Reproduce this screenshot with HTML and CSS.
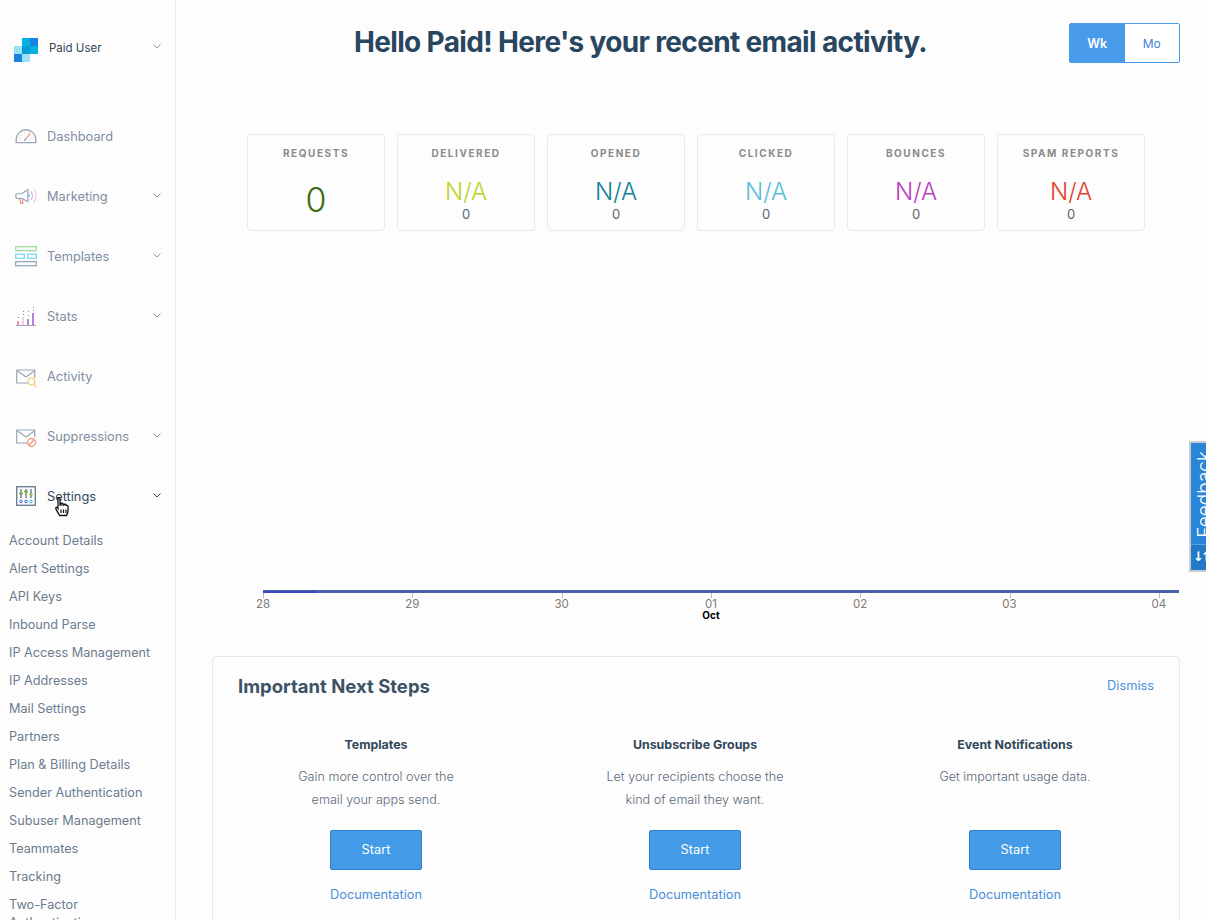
FILE: index.html
```html
<!DOCTYPE html>
<html lang="en">
<head>
    <meta charset="UTF-8">
    <title>Dashboard</title>
    <link rel="stylesheet" href="styles.css">
</head>
<body>
    <div class="app">
        <aside class="sidebar">
            <div class="account">
                <svg class="logo" width="24" height="24" viewBox="0 0 24 24">
                    <rect x="8" y="0" width="8" height="8" fill="#00b3e3"/>
                    <rect x="16" y="0" width="8" height="8" fill="#1a82e2"/>
                    <rect x="0" y="8" width="8" height="8" fill="#99e1f4"/>
                    <rect x="8" y="8" width="8" height="8" fill="#009dd9"/>
                    <rect x="16" y="8" width="8" height="8" fill="#00b3e3"/>
                    <rect x="0" y="16" width="8" height="8" fill="#1a82e2"/>
                    <rect x="8" y="16" width="8" height="8" fill="#99e1f4"/>
                </svg>
                <span class="account-name">Paid User</span>
                <svg class="chev" width="8" height="5" viewBox="0 0 8 5"><path d="M.5.5 4 4 7.500.5" fill="none" stroke="#8a9bb0"/></svg>
            </div>

            <nav class="nav">
                <a class="nav-item">
                    <span class="nav-icon">
                        <svg width="22" height="16" viewBox="0 0 24 18" fill="none">
                            <path d="M1 16.500V13A11 11 0 0 1 23 13v3.500z" stroke="#9aa7b8" stroke-width="1.500"/>
                            <path d="M5 12a7.500 7.500 0 0 1 3-6M10 4.500l1 0M15 5l1 .7M19 12v-1" stroke="#f5d76e" stroke-width="1.200" stroke-dasharray="1.500 1.500"/>
                            <path d="M11 13l6-7" stroke="#f29a7c" stroke-width="1.400"/>
                            <circle cx="11" cy="13.500" r="1.300" fill="#7cc4ee"/>
                        </svg>
                    </span>
                    <span class="nav-label">Dashboard</span>
                </a>
                <a class="nav-item">
                    <span class="nav-icon">
                        <svg width="22" height="19" viewBox="0 0 24 20" fill="none">
                            <path d="M2 7h5l7-4.500v13L7 12H2a1 1 0 0 1-1-1V8a1 1 0 0 1 1-1z" stroke="#9aa7b8" stroke-width="1.300"/>
                            <path d="M5 12.500l1.500 5h2L8 13" stroke="#ef8a72" stroke-width="1.200"/>
                            <circle cx="15" cy="9" r="1.500" fill="#7cc4ee"/>
                            <path d="M17 4a8 8 0 0 1 0 10" stroke="#e0a7de" stroke-width="1.100"/>
                            <path d="M20 1a12 12 0 0 1 0 16" stroke="#eac4e8" stroke-width="1.100"/>
                        </svg>
                    </span>
                    <span class="nav-label">Marketing</span>
                    <svg class="chev" width="8" height="5" viewBox="0 0 8 5"><path d="M.5.5 4 4 7.500.5" fill="none" stroke="#8a9bb0"/></svg>
                </a>
                <a class="nav-item">
                    <span class="nav-icon">
                        <svg width="22" height="21" viewBox="0 0 22 21" fill="none">
                            <rect x=".7" y=".7" width="20.600" height="4" stroke="#a5dba0" stroke-width="1.300"/>
                            <rect x=".7" y="8.200" width="8.600" height="4" stroke="#7fd6f7" stroke-width="1.300"/>
                            <rect x="12.700" y="8.200" width="8.600" height="4" stroke="#7fd6f7" stroke-width="1.300"/>
                            <rect x=".7" y="15.700" width="20.600" height="4" stroke="#9aa7b8" stroke-width="1.300"/>
                        </svg>
                    </span>
                    <span class="nav-label">Templates</span>
                    <svg class="chev" width="8" height="5" viewBox="0 0 8 5"><path d="M.5.5 4 4 7.500.5" fill="none" stroke="#8a9bb0"/></svg>
                </a>
                <a class="nav-item">
                    <span class="nav-icon nav-icon-in">
                        <svg width="20" height="20" viewBox="0 0 20 20" fill="none">
                            <path d="M0 19.500h20" stroke="#9aa7b8"/>
                            <rect x="1" y="15" width="2" height="4" fill="#f78fb3"/>
                            <rect x="6" y="11" width="2" height="8" fill="#f3cfe6"/>
                            <rect x="11" y="13" width="2" height="6" fill="#a88ae0"/>
                            <rect x="16" y="7" width="2" height="12" fill="#b57edc"/>
                            <path d="M2 11.500h1M7 5.500h1M7 8.500h1M12 9.500h1M12 5.500h1M17 1.500h1M17 4.500h1" stroke="#7d8ba0"/>
                        </svg>
                    </span>
                    <span class="nav-label">Stats</span>
                    <svg class="chev" width="8" height="5" viewBox="0 0 8 5"><path d="M.5.5 4 4 7.500.5" fill="none" stroke="#8a9bb0"/></svg>
                </a>
                <a class="nav-item">
                    <span class="nav-icon nav-icon-in">
                        <svg class="mail-icon" width="21" height="19" viewBox="0 0 21 19" fill="none">
                            <path d="M12 14H.7V1h18v8" stroke="#9aa7b8" stroke-width="1.200"/>
                            <path d="M1 1.500l9 6.500 9-6.500" stroke="#9aa7b8" stroke-width="1.200"/>
                            <circle cx="15.500" cy="12.500" r="3.300" stroke="#f7cf7e" stroke-width="1.300"/>
                            <path d="M18 15l2.500 3" stroke="#f7cf7e" stroke-width="1.300"/>
                        </svg>
                    </span>
                    <span class="nav-label">Activity</span>
                </a>
                <a class="nav-item">
                    <span class="nav-icon nav-icon-in">
                        <svg class="mail-icon" width="21" height="19" viewBox="0 0 21 19" fill="none">
                            <path d="M11 14H.7V1h18v7" stroke="#9aa7b8" stroke-width="1.200"/>
                            <path d="M1 1.500l9 6.500 9-6.500" stroke="#9aa7b8" stroke-width="1.200"/>
                            <circle cx="15.500" cy="13.500" r="4" stroke="#f09a80" stroke-width="1.400"/>
                            <path d="M12.800 16.200l5.400-5.400" stroke="#f09a80" stroke-width="1.400"/>
                        </svg>
                    </span>
                    <span class="nav-label">Suppressions</span>
                    <svg class="chev" width="8" height="5" viewBox="0 0 8 5"><path d="M.5.5 4 4 7.500.5" fill="none" stroke="#8a9bb0"/></svg>
                </a>
                <a class="nav-item nav-item-open">
                    <span class="nav-icon nav-icon-in">
                        <svg width="20" height="20" viewBox="0 0 20 20" fill="none">
                            <rect x=".7" y=".7" width="18.600" height="18.600" stroke="#6f7f94" stroke-width="1.400"/>
                            <path d="M5 3v9M10 3v9M15 3v9" stroke="#33475b"/>
                            <path d="M3 7.500h4M8 5.500h4" stroke="#5cb531" stroke-width="1.500"/>
                            <path d="M13 8.500h4" stroke="#b7c92e" stroke-width="1.500"/>
                            <circle cx="5" cy="15.500" r="1.300" stroke="#3563c9"/>
                            <circle cx="10" cy="15.500" r="1.300" stroke="#3563c9"/>
                            <circle cx="15" cy="15.500" r="1.300" stroke="#2bb6d9"/>
                        </svg>
                    </span>
                    <span class="nav-label">Settings</span>
                    <svg class="chev" width="8" height="5" viewBox="0 0 8 5"><path d="M.5.5 4 4 7.500.5" fill="none" stroke="#33475b"/></svg>
                </a>
            </nav>

            <ul class="subnav">
                <li>Account Details</li>
                <li>Alert Settings</li>
                <li>API Keys</li>
                <li>Inbound Parse</li>
                <li>IP Access Management</li>
                <li>IP Addresses</li>
                <li>Mail Settings</li>
                <li>Partners</li>
                <li>Plan &amp; Billing Details</li>
                <li>Sender Authentication</li>
                <li>Subuser Management</li>
                <li>Teammates</li>
                <li>Tracking</li>
                <li class="subnav-wrap">Two-Factor Authentication</li>
            </ul>
        </aside>

        <main class="main">
            <header class="top">
                <h1>Hello Paid! Here's your recent email activity.</h1>
                <div class="toggle">
                    <span class="toggle-btn toggle-on">Wk</span>
                    <span class="toggle-btn">Mo</span>
                </div>
            </header>

            <section class="cards">
                <div class="card">
                    <div class="card-title">REQUESTS</div>
                    <div class="card-big card-zero">0</div>
                </div>
                <div class="card">
                    <div class="card-title">DELIVERED</div>
                    <div class="card-big delivered">N/A</div>
                    <div class="card-small">0</div>
                </div>
                <div class="card">
                    <div class="card-title">OPENED</div>
                    <div class="card-big opened">N/A</div>
                    <div class="card-small">0</div>
                </div>
                <div class="card">
                    <div class="card-title">CLICKED</div>
                    <div class="card-big clicked">N/A</div>
                    <div class="card-small">0</div>
                </div>
                <div class="card">
                    <div class="card-title">BOUNCES</div>
                    <div class="card-big bounces">N/A</div>
                    <div class="card-small">0</div>
                </div>
                <div class="card card-wide">
                    <div class="card-title">SPAM REPORTS</div>
                    <div class="card-big spam">N/A</div>
                    <div class="card-small">0</div>
                </div>
            </section>

            <section class="chart">
                <div class="chart-line"><span class="chart-line-start"></span></div>
                <div class="axis">
                    <div class="tick"><span>28</span></div>
                    <div class="tick"><span>29</span></div>
                    <div class="tick"><span>30</span></div>
                    <div class="tick"><span>01</span><b>Oct</b></div>
                    <div class="tick"><span>02</span></div>
                    <div class="tick"><span>03</span></div>
                    <div class="tick"><span>04</span></div>
                </div>
            </section>

            <section class="steps">
                <div class="steps-head">
                    <h2>Important Next Steps</h2>
                    <a class="dismiss">Dismiss</a>
                </div>
                <div class="steps-row">
                    <div class="step">
                        <h3>Templates</h3>
                        <p>Gain more control over the<br>email your apps send.</p>
                        <a class="start">Start</a>
                        <a class="doc">Documentation</a>
                    </div>
                    <div class="step">
                        <h3>Unsubscribe Groups</h3>
                        <p>Let your recipients choose the<br>kind of email they want.</p>
                        <a class="start">Start</a>
                        <a class="doc">Documentation</a>
                    </div>
                    <div class="step">
                        <h3>Event Notifications</h3>
                        <p>Get important usage data.<br>&nbsp;</p>
                        <a class="start">Start</a>
                        <a class="doc">Documentation</a>
                    </div>
                </div>
            </section>
        </main>
    </div>

    <div class="feedback">
        <div class="feedback-text">Feedback</div>
        <div class="feedback-arrows">&#8595;&#8593;</div>
    </div>

    <svg class="cursor" width="15" height="20" viewBox="0 0 15 20">
        <path d="M3 1.500c0-1 2-1 2 0V8h1V7c0-1 2-1 2 0v1h1c0-1 2-1 2 0v1c0-1 2-.8 2 .2V14c0 2-1 3-1.500 4.500h-7C4 16.500 1.500 14 .8 11.500c-.3-1.200 1-1.700 1.700-.8L3 11.500z" fill="#fff" stroke="#111" stroke-width="1.300"/>
        <path d="M6 12.500v3.500M8.500 12.500v3.500M11 12.500v3.500" stroke="#111" stroke-width="1.200"/>
    </svg>
</body>
</html>
```

FILE: styles.css
```css
html, body {
    margin: 0;
    height: 920px;
    overflow: hidden;
}
body {
    font-family: Inter, "Noto Sans", Arial, sans-serif;
    font-size: 13px;
    color: #33475b;
    background-color: #fdfdfd;
    position: relative;
}
.app {
    display: flex;
    height: 920px;
    overflow: hidden;
}

/* sidebar */
.sidebar {
    width: 175px;
    flex: none;
    border-right: 1px solid #e9ecef;
}
.account {
    display: flex;
    align-items: center;
    height: 24px;
    padding: 38px 14px 0 14px;
}
.account-name {
    margin-left: 11px;
    font-size: 11.500px;
    flex: 1;
    position: relative;
    top: -2px;
}
.account .chev {
    position: relative;
    top: -4px;
}
.nav {
    margin-top: 44px;
}
.nav-item {
    display: flex;
    align-items: center;
    height: 60px;
    padding: 0 14px 0 15px;
    color: #7e8da1;
    font-size: 12.800px;
}
.nav-icon {
    width: 32px;
    height: 20px;
    flex: none;
    display: flex;
    align-items: center;
}
.nav-icon-in svg {
    margin-left: 1px;
    margin-right: -1px;
}
.mail-icon {
    position: relative;
    top: 2px;
}
.nav-label {
    flex: 1;
}
.nav-item .chev {
    position: relative;
    top: -1px;
}
.nav-item-open {
    color: #33475b;
}
.subnav {
    list-style: none;
    margin: 1px 0 0 0;
    padding: 0 20px 0 9px;
    font-size: 12.700px;
    color: #6b7c8e;
}
.subnav li {
    line-height: 28px;
}
.subnav .subnav-wrap {
    line-height: 18px;
    padding-top: 5px;
}

/* main */
.main {
    flex: 1;
    min-width: 0;
    padding: 0 26px 0 36px;
}
.top {
    display: flex;
    align-items: flex-start;
    height: 134px;
}
h1 {
    flex: 1;
    margin: 22px 0 0 0;
    text-align: center;
    font-size: 28px;
    line-height: 40px;
    font-weight: 700;
    letter-spacing: -0.650px;
    color: #294661;
}
.toggle {
    display: flex;
    margin-top: 23px;
    width: 111px;
    height: 40px;
    box-sizing: border-box;
    border: 1px solid #489be8;
    border-radius: 2px;
    background-color: #fff;
}
.toggle-btn {
    flex: 1;
    display: flex;
    align-items: center;
    justify-content: center;
    font-size: 12px;
    color: #3f7fd6;
}
.toggle-on {
    background-color: #489be8;
    color: #fff;
    font-weight: 600;
    font-size: 12.500px;
}

/* stat cards */
.cards {
    display: flex;
    gap: 12px;
    padding-left: 35px;
}
.card {
    width: 138px;
    height: 97px;
    box-sizing: border-box;
    border: 1px solid #e6e8ea;
    border-radius: 4px;
    text-align: center;
    padding-top: 11px;
}
.card-wide {
    width: 148px;
}
.card-title {
    font-size: 10px;
    line-height: 14px;
    font-weight: 700;
    letter-spacing: 1.550px;
    color: #8a8a8a;
}
.card-big {
    font-size: 24px;
    line-height: 28px;
    font-weight: 300;
    margin-top: 18px;
}
.card-zero {
    font-size: 34px;
    line-height: 40px;
    margin-top: 20px;
    color: #3f6b12;
}
.card-small {
    font-size: 13px;
    line-height: 16px;
    margin-top: 0;
    color: #5a6472;
}
.delivered { color: #bdd32a; }
.opened { color: #0f8299; }
.clicked { color: #58bfd6; }
.bounces { color: #b93fbd; }
.spam { color: #e2432e; }

/* chart */
.chart {
    padding-left: 51px;
    margin-top: 359px;
    margin-right: 1px;
}
.chart-line {
    height: 3px;
    background-color: #4a62a8;
    position: relative;
}
.chart-line-start {
    position: absolute;
    left: 0;
    bottom: 0;
    width: 53px;
    height: 2px;
    background-color: #3a46c4;
}
.axis {
    display: grid;
    grid-template-columns: repeat(7, 149.3px);
    height: 63px;
    margin-left: -74.6px;
}
.tick {
    text-align: center;
    position: relative;
    font-size: 11.500px;
    color: #807a76;
    line-height: 12px;
    padding-top: 5px;
}
.tick span {
    display: block;
}
.tick::before {
    content: "";
    position: absolute;
    top: 0;
    left: 50%;
    width: 1px;
    height: 5px;
    background-color: #b8bec8;
}
.tick b {
    display: block;
    font-size: 10px;
    line-height: 10px;
    color: #000;
}

/* next steps */
.steps {
    border: 1px solid #e6e8ea;
    border-radius: 4px;
    padding: 0 25px 0 25px;
    height: 400px;
}
.steps-head {
    display: flex;
    justify-content: space-between;
    align-items: center;
    height: 58px;
}
h2 {
    margin: 0;
    font-size: 18.500px;
    font-weight: 700;
    letter-spacing: 0;
    color: #3d5266;
}
.dismiss {
    font-size: 12.800px;
    color: #4a90d9;
    position: relative;
    top: -1px;
}
.steps-row {
    display: grid;
    grid-template-columns: 276px 362px 278px;
    margin-top: 20px;
}
.step {
    text-align: center;
}
h3 {
    margin: 0;
    font-size: 12.400px;
    line-height: 20px;
    font-weight: 700;
    color: #33475b;
}
.step p {
    margin: 10px 0 19px 0;
    font-size: 12.600px;
    line-height: 23px;
    font-weight: 300;
    color: #5a6a7a;
}
.start {
    display: block;
    width: 92px;
    height: 40px;
    margin: 0 auto;
    box-sizing: border-box;
    border: 1px solid #2f7fd0;
    background-color: #439be8;
    color: #fff;
    font-size: 12.800px;
    line-height: 38px;
    border-radius: 2px;
}
.doc {
    display: block;
    margin-top: 15px;
    font-size: 12.800px;
    line-height: 20px;
    color: #4a90d9;
}

/* overlays */
.feedback {
    position: absolute;
    top: 441px;
    left: 1189px;
    width: 19px;
    height: 131px;
    box-sizing: border-box;
    border: 2px solid #c6ccd2;
    border-right: none;
    background-color: #2a84d8;
    overflow: hidden;
}
.feedback-text {
    position: absolute;
    left: 5px;
    bottom: 32px;
    writing-mode: vertical-rl;
    transform: rotate(180deg);
    font-size: 19px;
    font-weight: 300;
    line-height: 18px;
    color: #fff;
    white-space: nowrap;
}
.feedback-arrows {
    position: absolute;
    left: 0;
    width: 40px;
    bottom: 0;
    height: 25px;
    padding-left: 2px;
    border-top: 1px solid #5a9fd8;
    background-color: #2478c8;
    color: #fff;
    font-family: "DejaVu Sans", sans-serif;
    font-size: 13px;
    font-weight: 700;
    line-height: 24px;
    letter-spacing: -3px;
    white-space: nowrap;
}
.cursor {
    position: absolute;
    left: 55px;
    top: 497px;
}
```
